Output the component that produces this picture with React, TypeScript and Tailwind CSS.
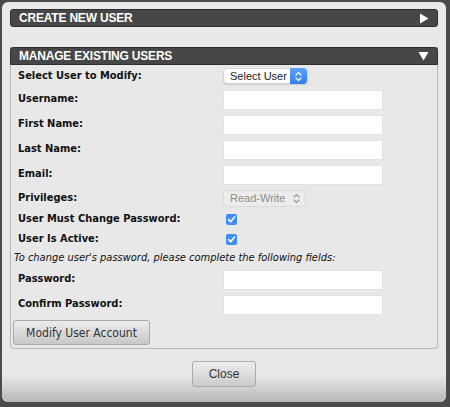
const labelFont = "font-['DejaVu_Sans_Condensed','DejaVu_Sans',sans-serif]";
const uiFont = "font-['Liberation_Sans',Arial,sans-serif]";

function Header({ title, open }: { title: string; open: boolean }) {
  return (
    <div
      className={`flex h-[18px] items-center justify-between border border-[#2f2f2f] bg-[#474747] pl-[8px] pr-[8px] ${
        open ? "rounded-t-[3px]" : "rounded-[3px]"
      }`}
    >
      <span className={`${uiFont} text-[12px] font-bold leading-none tracking-[-0.2px] text-white`}>
        {title}
      </span>
      {open ? (
        <svg width="11" height="10" viewBox="0 0 11 10">
          <path d="M0.5 1 L10.5 1 L5.5 9.5 Z" fill="#fff" />
        </svg>
      ) : (
        <svg width="10" height="11" viewBox="0 0 10 11">
          <path d="M1 0.5 L9.5 5.5 L1 10.5 Z" fill="#fff" />
        </svg>
      )}
    </div>
  );
}

function Row({ label, h, children }: { label: string; h: string; children?: React.ReactNode }) {
  return (
    <div className={`flex items-center ${h}`}>
      <div className={`${labelFont} w-[210px] shrink-0 pl-[5px] text-[11px] font-bold text-[#111]`}>
        {label}
      </div>
      <div className="flex items-center">{children}</div>
    </div>
  );
}

function TextBox() {
  return <div className="h-[20px] w-[160px] border border-[#e2e2e2] bg-white" />;
}

function Check() {
  return (
    <div className="ml-[3px] flex h-[11px] w-[11px] items-center justify-center rounded-[2px] bg-[#3d8ef5]">
      <svg width="9" height="9" viewBox="0 0 9 9">
        <path d="M1.6 4.6 L3.7 6.8 L7.5 2" stroke="#fff" strokeWidth="1.6" fill="none" strokeLinecap="round" strokeLinejoin="round" />
      </svg>
    </div>
  );
}

function Chevrons({ color }: { color: string }) {
  return (
    <svg width="7" height="11" viewBox="0 0 7 11">
      <path d="M1 4 L3.5 1.5 L6 4 M1 7 L3.5 9.5 L6 7" stroke={color} strokeWidth="1.2" fill="none" strokeLinecap="round" strokeLinejoin="round" />
    </svg>
  );
}

export default function App() {
  return (
    <div className="h-[407px] w-[450px] overflow-hidden bg-[#4b4b4b] pl-[2px] pr-[4px] pt-[2px]">
      <div className="flex h-[400px] flex-col overflow-hidden rounded-[6px] bg-[#e8e8e8]">
        <div className="px-[8px] pt-[7px]">
          <Header title="CREATE NEW USER" open={false} />

          <div className="mt-[20px] rounded-b-[4px] border-x border-b border-[#b9b9b9]">
            <div className="-mx-px">
              <Header title="MANAGE EXISTING USERS" open />
            </div>
            <div className="px-[2px] pb-[3px]">
              <Row label="Select User to Modify:" h="h-[22px]">
                <div className="flex h-[16px] w-[85px] shrink-0 items-center justify-between rounded-[4px] border border-[#d4d4d4] bg-white shadow-[0_1px_1px_rgba(0,0,0,0.12)]">
                  <span className={`${uiFont} whitespace-nowrap pl-[6px] text-[11px] leading-none text-[#222]`}>
                    Select User
                  </span>
                  <div className="flex h-[16px] w-[17px] shrink-0 items-center justify-center rounded-r-[4px] bg-gradient-to-b from-[#5aa3f8] to-[#2f7ff0]">
                    <Chevrons color="#fff" />
                  </div>
                </div>
              </Row>
              <Row label="Username:" h="h-[25px]">
                <TextBox />
              </Row>
              <Row label="First Name:" h="h-[25px]">
                <TextBox />
              </Row>
              <Row label="Last Name:" h="h-[25px]">
                <TextBox />
              </Row>
              <Row label="Email:" h="h-[25px]">
                <TextBox />
              </Row>
              <Row label="Privileges:" h="h-[23px]">
                <div className="flex h-[17px] w-[83px] shrink-0 items-center justify-between rounded-[4px] border border-[#dadada] bg-[#ececec] pl-[6px] pr-[5px]">
                  <span className={`${uiFont} whitespace-nowrap text-[11px] leading-none text-[#8c8c8c]`}>Read-Write</span>
                  <Chevrons color="#999" />
                </div>
              </Row>
              <Row label="User Must Change Password:" h="h-[19px]">
                <Check />
              </Row>
              <Row label="User Is Active:" h="h-[21px]">
                <Check />
              </Row>
              <div className={`${labelFont} flex h-[17px] items-center pl-[1px] text-[11px] italic text-[#111]`}>
                To change user's password, please complete the following fields:
              </div>
              <Row label="Password:" h="h-[25px]">
                <TextBox />
              </Row>
              <Row label="Confirm Password:" h="h-[25px]">
                <TextBox />
              </Row>
              <button
                type="button"
                className={`${labelFont} mt-[3px] flex h-[25px] w-[137px] items-center justify-center rounded-[3px] border border-[#a9a9a9] bg-gradient-to-b from-[#ececec] to-[#c8c8c8] text-[12px] text-[#333]`}
              >
                Modify User Account
              </button>
            </div>
          </div>
        </div>

        <div className="flex flex-1 justify-center bg-gradient-to-b from-[#e8e8e8] from-50% to-[#b8b8b8] pt-[12px]">
          <button
            type="button"
            className={`${uiFont} h-[26px] w-[64px] rounded-[3px] border border-[#ababab] bg-gradient-to-b from-[#eeeeee] to-[#cbcbcb] text-[12px] text-[#333]`}
          >
            Close
          </button>
        </div>
      </div>
    </div>
  );
}
